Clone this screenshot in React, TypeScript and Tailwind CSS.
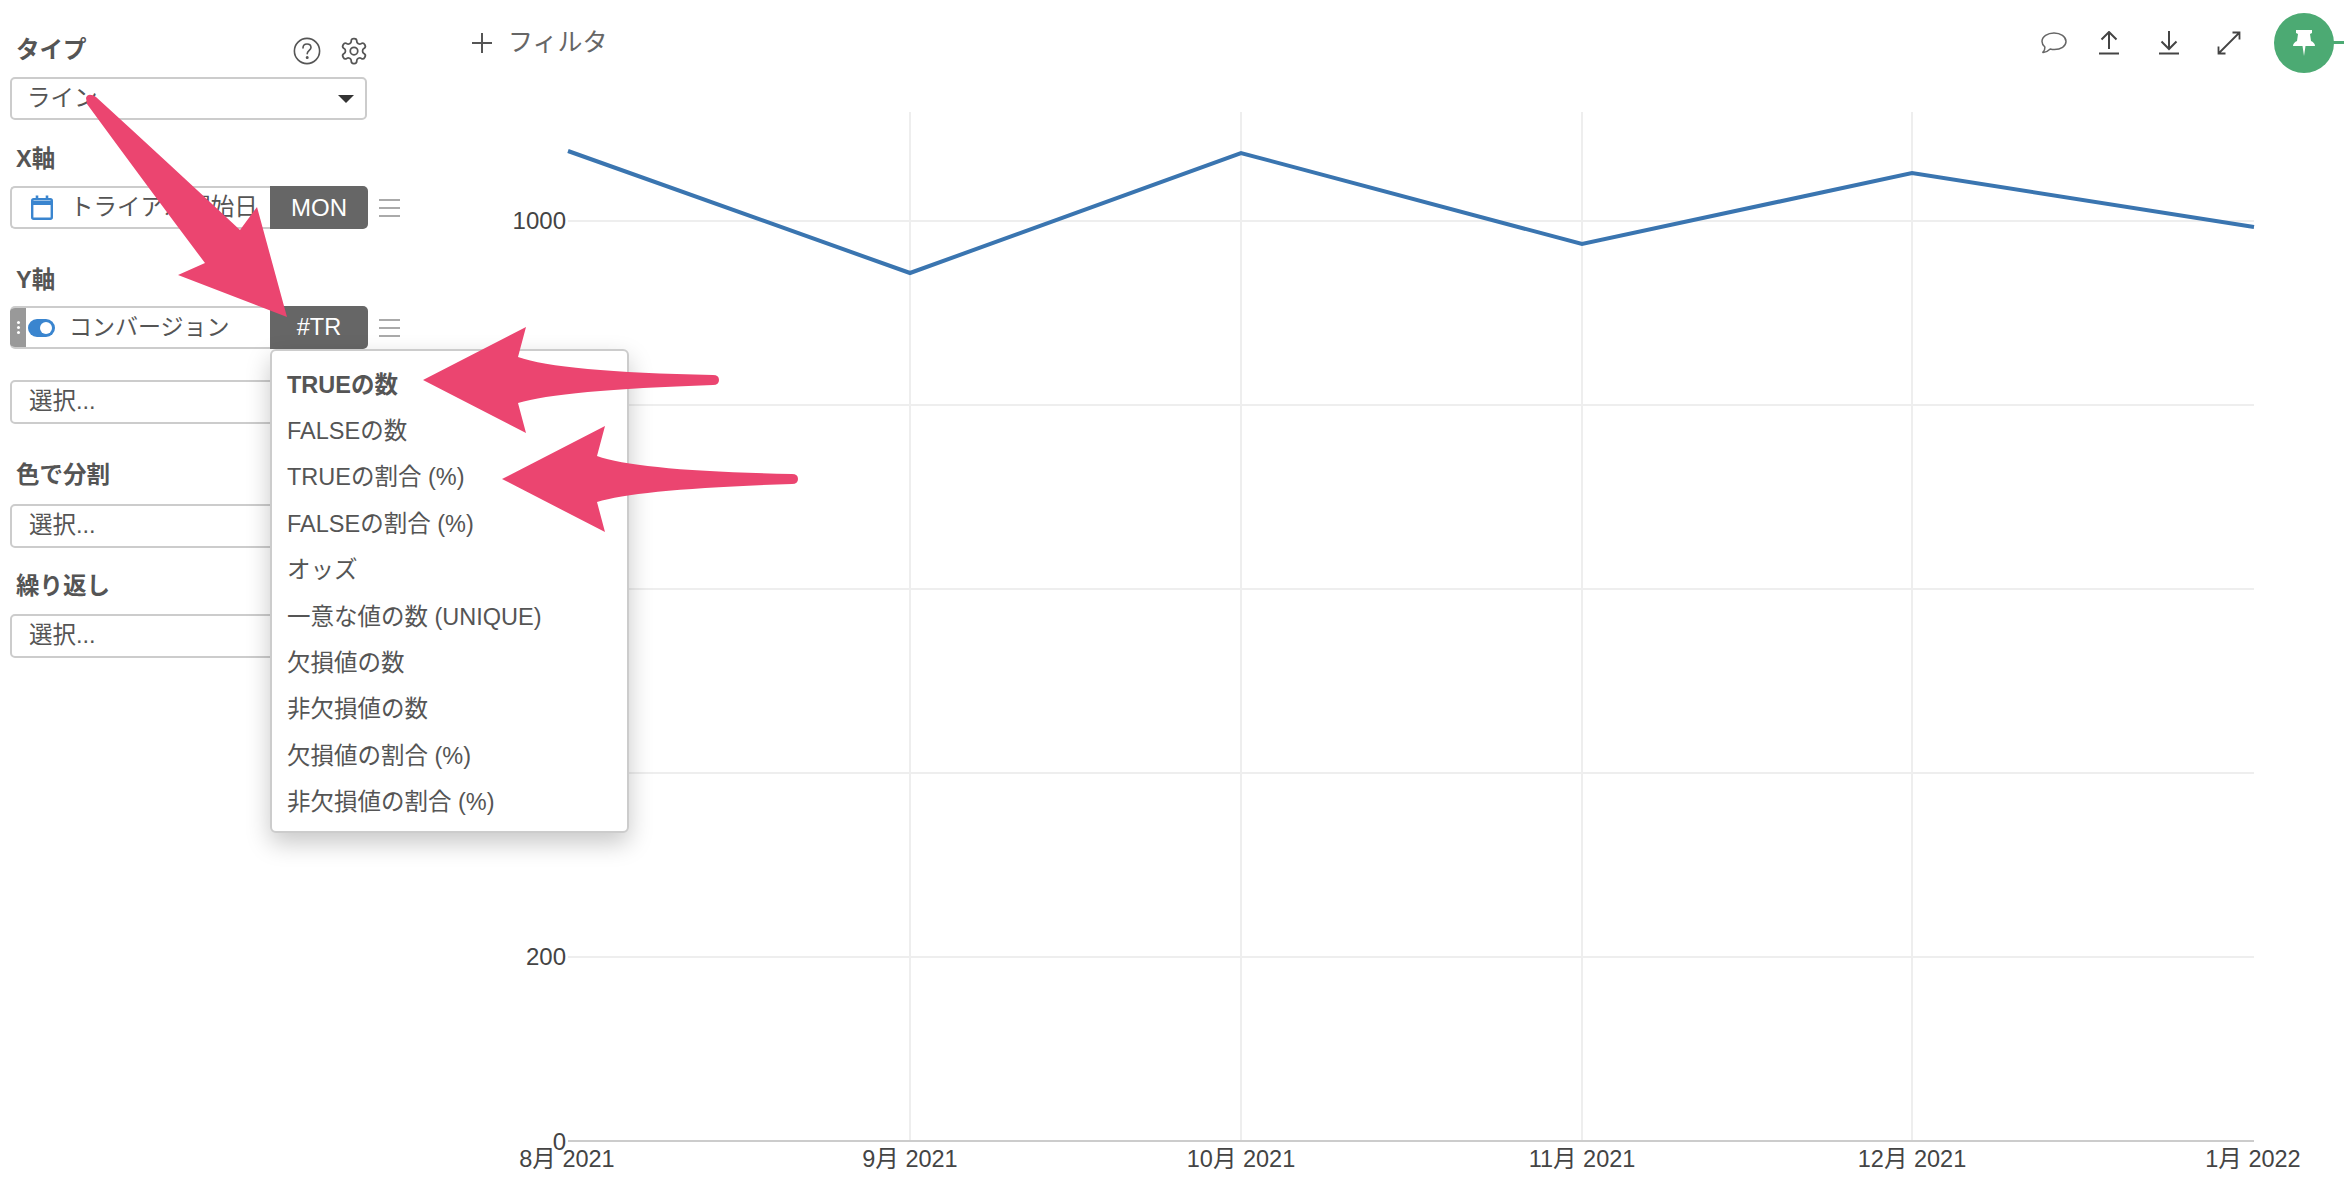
const font = { fontFamily: '"Liberation Sans", "Noto Sans CJK JP", sans-serif' };

function Label({ children, className = "" }: { children: React.ReactNode; className?: string }) {
  return <div className={`h-8 flex items-center pl-1.5 text-[23.5px] font-bold text-[#555] ${className}`}>{children}</div>;
}

function Hamburger() {
  return (
    <div className="w-[21px] ml-[11px] flex flex-col gap-[6px]">
      <div className="h-[2px] bg-[#aaa]" />
      <div className="h-[2px] bg-[#aaa]" />
      <div className="h-[2px] bg-[#aaa]" />
    </div>
  );
}

function SelectBox({ className = "" }: { className?: string }) {
  return (
    <div className={`w-[357px] h-[44px] border-2 border-[#ccc] rounded-[5px] bg-white flex items-center pl-[17px] text-[23.5px] text-[#555] ${className}`}>
      選択...
    </div>
  );
}

const items = [
  "TRUEの数",
  "FALSEの数",
  "TRUEの割合 (%)",
  "FALSEの割合 (%)",
  "オッズ",
  "一意な値の数 (UNIQUE)",
  "欠損値の数",
  "非欠損値の数",
  "欠損値の割合 (%)",
  "非欠損値の割合 (%)",
];

function Dropdown() {
  return (
    <div className="absolute left-[260px] top-[43px] z-10 w-[359px] h-[484px] pt-[11px] bg-white border-2 border-[#ccc] rounded-[6px] shadow-[0_10px_24px_rgba(0,0,0,0.22)]">
      {items.map((t, i) => (
        <div key={t} className={`h-[46.4px] flex items-center pl-[15px] text-[23.5px] text-[#555] whitespace-nowrap ${i === 0 ? "font-bold" : ""}`}>
          {t}
        </div>
      ))}
    </div>
  );
}

function Sidebar() {
  return (
    <aside className="w-[420px] shrink-0 pl-[10px] pt-[34.5px]">
      <div className="w-[359px] flex items-center justify-between">
        <Label>タイプ</Label>
        <div className="flex items-center gap-[18px]">
          <svg width="28" height="28" viewBox="0 0 28 28" fill="none" stroke="#555" strokeWidth="1.6" strokeLinecap="round">
            <circle cx="14" cy="14" r="12.6" />
            <path d="M10 11 C10 8.2 12 7 14 7 C16.400 7 18 8.600 18 10.600 C18 13.400 14.200 13.600 14.200 16.800" />
            <circle cx="14.200" cy="20.400" r="0.7" fill="#555" />
          </svg>
          <svg width="30" height="30" viewBox="0 0 24 24" fill="none" stroke="#555" strokeWidth="1.4" strokeLinecap="round" strokeLinejoin="round">
            <path d="M12.220 2h-.44a2 2 0 0 0-2 2v.18a2 2 0 0 1-1 1.730l-.43.25a2 2 0 0 1-2 0l-.15-.08a2 2 0 0 0-2.730.73l-.22.38a2 2 0 0 0 .73 2.730l.15.1a2 2 0 0 1 1 1.720v.51a2 2 0 0 1-1 1.740l-.15.09a2 2 0 0 0-.73 2.730l.22.38a2 2 0 0 0 2.730.73l.15-.08a2 2 0 0 1 2 0l.43.25a2 2 0 0 1 1 1.730V20a2 2 0 0 0 2 2h.44a2 2 0 0 0 2-2v-.18a2 2 0 0 1 1-1.730l.43-.25a2 2 0 0 1 2 0l.15.08a2 2 0 0 0 2.730-.73l.22-.39a2 2 0 0 0-.73-2.730l-.15-.08a2 2 0 0 1-1-1.740v-.5a2 2 0 0 1 1-1.740l.15-.09a2 2 0 0 0 .73-2.730l-.22-.38a2 2 0 0 0-2.730-.73l-.15.08a2 2 0 0 1-2 0l-.43-.25a2 2 0 0 1-1-1.730V4a2 2 0 0 0-2-2z" />
            <circle cx="12" cy="12" r="3" />
          </svg>
        </div>
      </div>

      <div className="mt-[10.5px] w-[357px] h-[43px] border-2 border-[#ccc] rounded-[5px] bg-white flex items-center justify-between pl-[15px] pr-[11px] text-[23.5px] text-[#555]">
        <span>ライン</span>
        <span className="w-0 h-0 border-x-[8px] border-x-transparent border-t-[8px] border-t-[#333]" />
      </div>

      <Label className="mt-[24px]">X軸</Label>
      <div className="mt-[10px] flex items-center">
        <div className="w-[260px] h-[43px] border-2 border-r-0 border-[#ccc] rounded-l-[5px] bg-white flex items-center pl-[19px] text-[23.5px] text-[#555] overflow-hidden">
          <svg width="22" height="25" viewBox="0 0 22 25" className="shrink-0 mr-[17px]" fill="none" stroke="#3a85cf">
            <rect x="1.200" y="4.200" width="19.600" height="19.600" rx="1.500" strokeWidth="2.400" />
            <path d="M1 6h20v4H1z" fill="#3a85cf" strokeWidth="0" />
            <path d="M6 0.500v4M16 0.500v4" strokeWidth="2.600" />
          </svg>
          <span className="whitespace-nowrap">トライアル開始日</span>
        </div>
        <div className="w-[98px] h-[43px] bg-[#666] rounded-r-[5px] flex items-center justify-center text-white text-[24px]">MON</div>
        <Hamburger />
      </div>

      <Label className="mt-[36px]">Y軸</Label>
      <div className="relative mt-[9px] flex items-center">
        <div className="w-[260px] h-[43px] border-2 border-l-0 border-r-0 border-[#ccc] rounded-l-[5px] bg-white flex items-center text-[23.5px] text-[#555] overflow-hidden">
          <div className="w-[16px] h-[43px] shrink-0 bg-[#999] rounded-l-[5px] flex flex-col items-center justify-center gap-[2px] pl-[1px]">
            <span className="w-[3px] h-[3px] rounded-full bg-white" />
            <span className="w-[3px] h-[3px] rounded-full bg-white" />
            <span className="w-[3px] h-[3px] rounded-full bg-white" />
          </div>
          <div className="ml-[2px] mr-[14px] w-[27px] h-[18px] shrink-0 rounded-full bg-[#3a85cf] flex items-center justify-end pr-[3px]">
            <span className="w-[12px] h-[12px] rounded-full bg-white" />
          </div>
          <span className="whitespace-nowrap text-[23px]">コンバージョン</span>
        </div>
        <div className="w-[98px] h-[43px] bg-[#666] rounded-r-[5px] flex items-center justify-center text-white text-[23.5px]">#TR</div>
        <Hamburger />
        <Dropdown />
      </div>

      <SelectBox className="mt-[31px]" />

      <Label className="mt-[36px]">色で分割</Label>
      <SelectBox className="mt-[12px]" />

      <Label className="mt-[23px]">繰り返し</Label>
      <SelectBox className="mt-[11px]" />
    </aside>
  );
}

function Toolbar() {
  return (
    <div className="h-[100px] shrink-0 flex items-start justify-between">
      <div className="flex items-center h-[86px] pl-[51px] text-[25px] text-[#666]">
        <svg width="22" height="22" viewBox="0 0 22 22" stroke="#555" strokeWidth="2" className="mr-[15px]">
          <path d="M11 1v20M1 11h20" />
        </svg>
        <span>フィルタ</span>
      </div>
      <div className="flex items-center h-[86px]">
        <svg width="26" height="24" viewBox="0 0 26 24" fill="none" stroke="#666" strokeWidth="1.5" strokeLinejoin="round" className="mr-[32px]">
          <path d="M13 2 C19.500 2 25 5.600 25 10.500 C25 15.200 19.800 18.600 13.400 18.600 C11.800 18.600 10.600 18.400 9.200 18 C7.400 19.800 5 21.600 1.800 21.400 C3.400 19.800 4.100 18.200 3.900 16 C2.200 14.600 1 12.800 1 10.500 C1 5.600 6.500 2 13 2 Z" />
        </svg>
        <svg width="20" height="24" viewBox="0 0 20 24" fill="none" stroke="#444" strokeWidth="2" className="mr-[40px]">
          <path d="M10 1v17M2.500 8.500 10 1l7.500 7.500M0 22.500h20" />
        </svg>
        <svg width="20" height="24" viewBox="0 0 20 24" fill="none" stroke="#444" strokeWidth="2" className="mr-[38px]">
          <path d="M10 0v18M2.500 10.500 10 18l7.500-7.500M0 22.500h20" />
        </svg>
        <svg width="24" height="24" viewBox="0 0 24 24" fill="none" stroke="#444" strokeWidth="1.800" className="mr-[33px]">
          <path d="M1.500 22.500 22.500 1.500M15.500 1.500h7v7M1.500 15.500v7h7" />
        </svg>
        <div className="relative w-[60px] h-[60px] rounded-full bg-[#4caa73] flex items-center justify-center mr-[10px]">
          <svg width="22" height="26" viewBox="0 0 22 26" fill="white">
            <path d="M3 0h16v3l-2 1 1 7c2 1 4 2.500 4 5H12.500l-1.500 10-1.500-10H0c0-2.500 2-4 4-5l1-7-2-1z" />
          </svg>
          <span className="absolute left-[59px] top-[28px] w-[11px] h-[3px] bg-[#4caa73]" />
        </div>
      </div>
    </div>
  );
}

function Chart() {
  const ys = [221, 405, 589, 773, 957];
  const xs = [910, 1241, 1582, 1912];
  const ticks: [number, string][] = [
    [567, "8月 2021"],
    [910, "9月 2021"],
    [1241, "10月 2021"],
    [1582, "11月 2021"],
    [1912, "12月 2021"],
    [2253, "1月 2022"],
  ];
  return (
    <svg width="1924" height="1096" viewBox="420 100 1924 1096" className="block" style={font}>
      {ys.map((y) => (
        <line key={y} x1="568" x2="2254" y1={y} y2={y} stroke="#eee" strokeWidth="2" />
      ))}
      {xs.map((x) => (
        <line key={x} x1={x} x2={x} y1="112" y2="1141" stroke="#eee" strokeWidth="2" />
      ))}
      <line x1="568" x2="2254" y1="1141" y2="1141" stroke="#ccc" strokeWidth="2" />
      <polyline
        points="568,151 910,273 1241,153 1582,244 1912,173 2254,227"
        fill="none"
        stroke="#3a75b0"
        strokeWidth="4"
      />
      <g fontSize="24" fill="#444" textAnchor="end">
        <text x="566" y="229">1000</text>
        <text x="566" y="965">200</text>
        <text x="566" y="1150">0</text>
      </g>
      <g fontSize="23.500" fill="#444" textAnchor="middle">
        {ticks.map(([x, t]) => (
          <text key={t} x={x} y="1167">{t}</text>
        ))}
      </g>
    </svg>
  );
}

function Arrows() {
  const side = (dy: number, dx: number) =>
    `M${423 + dx} ${380 + dy} L${526 + dx} ${327 + dy} L${518 + dx} ${357 + dy} Q${560 + dx} ${372 + dy} ${713 + dx} ${375 + dy} Q${719 + dx} ${375 + dy} ${719 + dx} ${380 + dy} Q${719 + dx} ${385 + dy} ${713 + dx} ${385 + dy} Q${560 + dx} ${390 + dy} ${518 + dx} ${403 + dy} L${526 + dx} ${433 + dy} Z`;
  return (
    <svg width="2344" height="1196" viewBox="0 0 2344 1196" className="absolute inset-0 z-20 pointer-events-none" fill="#eb4570">
      <path d="M87 104 Q150 190 205 263 L178 275 L287 317 L257 207 L240 230 Q165 160 96 97 Q88 92 86 98 Z" />
      <path d={side(0, 0)} />
      <path d={side(99, 79)} />
    </svg>
  );
}

export default function App() {
  return (
    <div className="relative w-[2344px] h-[1196px] overflow-hidden bg-white flex" style={font}>
      <Sidebar />
      <main className="flex-1 flex flex-col min-w-0">
        <Toolbar />
        <Chart />
      </main>
      <Arrows />
    </div>
  );
}
